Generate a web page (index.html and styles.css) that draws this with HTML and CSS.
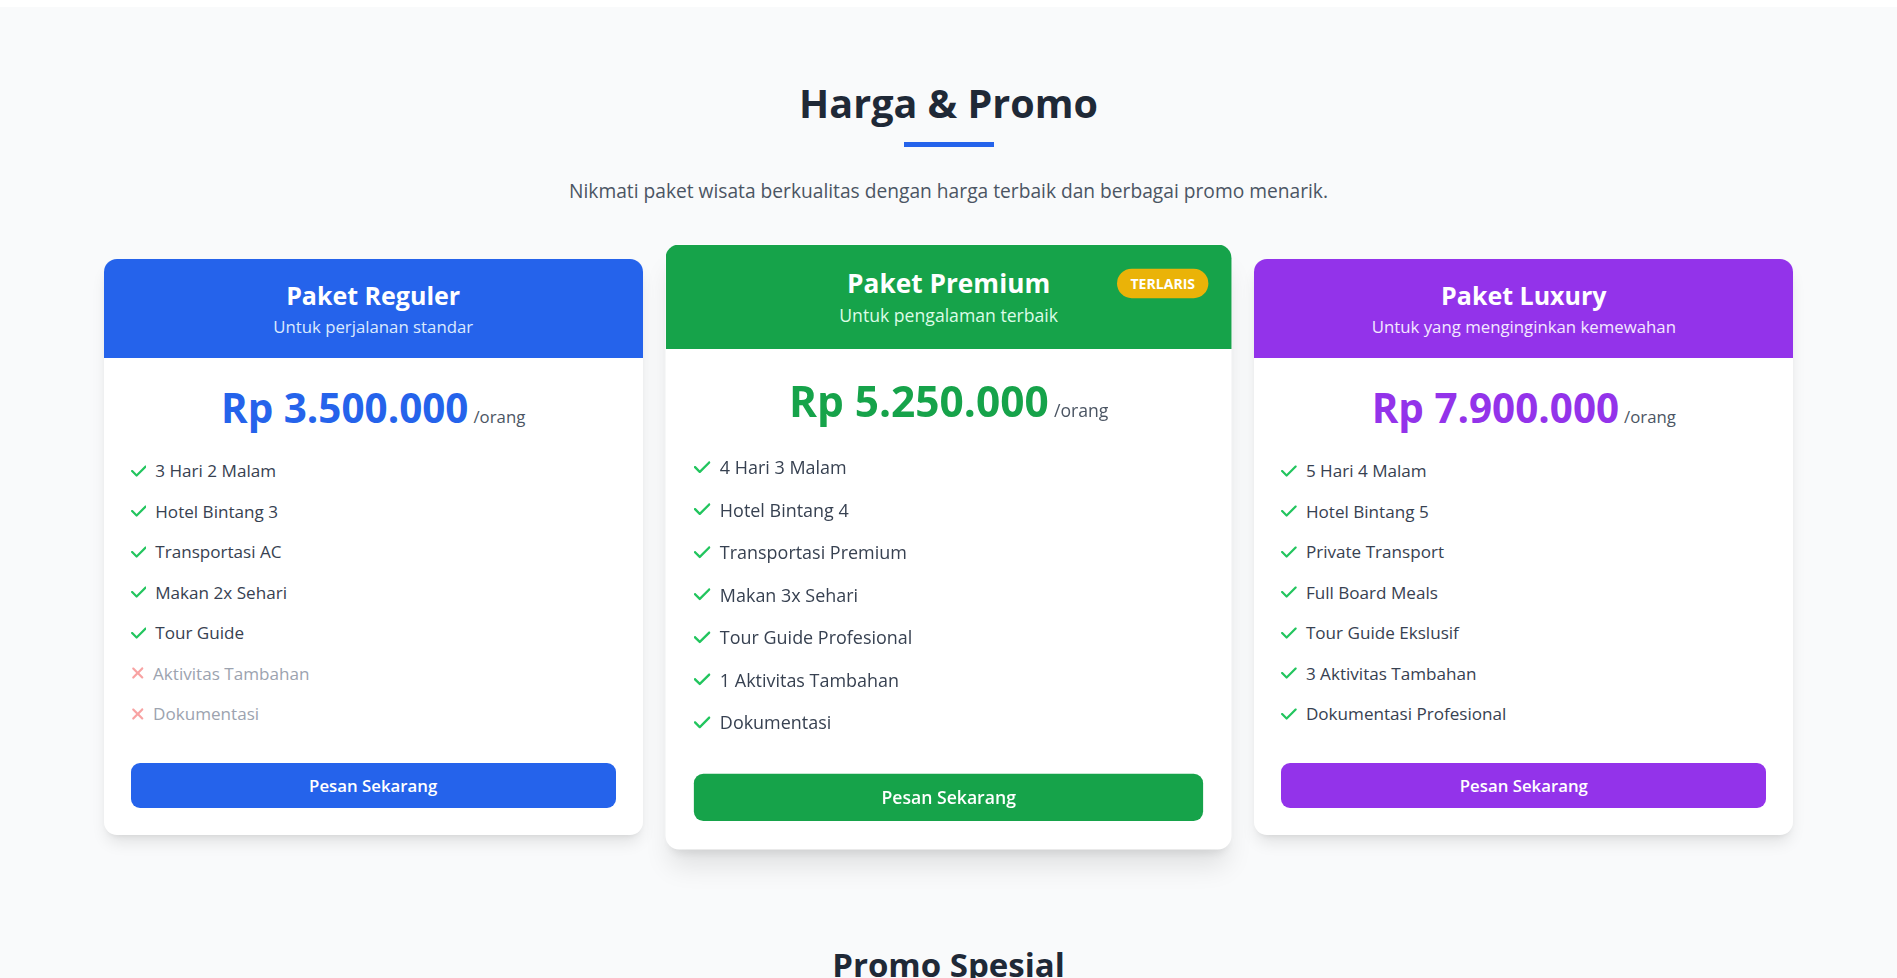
FILE: index.html
```html
<!DOCTYPE html>
<html lang="id">

<head>
    <meta charset="UTF-8">
    <meta name="viewport" content="width=device-width, initial-scale=1.0">
    <title>Harga &amp; Promo</title>
    <link rel="stylesheet" href="styles.css">
</head>

<body>
    <div class="strip"></div>

    <section class="harga">
        <h2 class="judul">Harga &amp; Promo</h2>
        <div class="garis"></div>
        <p class="deskripsi">Nikmati paket wisata berkualitas dengan harga terbaik dan berbagai promo menarik.</p>

        <div class="kartu-grid">
            <!-- paket reguler -->
            <div class="kartu biru">
                <div class="kartu-atas">
                    <h3>Paket Reguler</h3>
                    <p>Untuk perjalanan standar</p>
                </div>
                <div class="kartu-isi">
                    <div class="harga-baris"><span class="nominal">Rp 3.500.000</span><span class="per">/orang</span></div>
                    <ul class="fitur">
                        <li><svg class="cek" viewBox="0 0 448 512"><path d="M438.6 105.4c12.5 12.5 12.5 32.8 0 45.3l-256 256c-12.5 12.5-32.8 12.5-45.3 0l-128-128c-12.5-12.5-12.5-32.8 0-45.3s32.8-12.5 45.3 0L160 338.7 393.4 105.4c12.5-12.5 32.8-12.5 45.3 0z"/></svg>3 Hari 2 Malam</li>
                        <li><svg class="cek" viewBox="0 0 448 512"><path d="M438.6 105.4c12.5 12.5 12.5 32.8 0 45.3l-256 256c-12.5 12.5-32.8 12.5-45.3 0l-128-128c-12.5-12.5-12.5-32.8 0-45.3s32.8-12.5 45.3 0L160 338.7 393.4 105.4c12.5-12.5 32.8-12.5 45.3 0z"/></svg>Hotel Bintang 3</li>
                        <li><svg class="cek" viewBox="0 0 448 512"><path d="M438.6 105.4c12.5 12.5 12.5 32.8 0 45.3l-256 256c-12.5 12.5-32.8 12.5-45.3 0l-128-128c-12.5-12.5-12.5-32.8 0-45.3s32.8-12.5 45.3 0L160 338.7 393.4 105.4c12.5-12.5 32.8-12.5 45.3 0z"/></svg>Transportasi AC</li>
                        <li><svg class="cek" viewBox="0 0 448 512"><path d="M438.6 105.4c12.5 12.5 12.5 32.8 0 45.3l-256 256c-12.5 12.5-32.8 12.5-45.3 0l-128-128c-12.5-12.5-12.5-32.8 0-45.3s32.8-12.5 45.3 0L160 338.7 393.4 105.4c12.5-12.5 32.8-12.5 45.3 0z"/></svg>Makan 2x Sehari</li>
                        <li><svg class="cek" viewBox="0 0 448 512"><path d="M438.6 105.4c12.5 12.5 12.5 32.8 0 45.3l-256 256c-12.5 12.5-32.8 12.5-45.3 0l-128-128c-12.5-12.5-12.5-32.8 0-45.3s32.8-12.5 45.3 0L160 338.7 393.4 105.4c12.5-12.5 32.8-12.5 45.3 0z"/></svg>Tour Guide</li>
                        <li class="tidak"><svg class="silang" viewBox="0 0 384 512"><path d="M342.6 150.6c12.5-12.5 12.5-32.8 0-45.3s-32.8-12.5-45.3 0L192 210.7 86.6 105.4c-12.5-12.5-32.8-12.5-45.3 0s-12.5 32.8 0 45.3L146.7 256 41.4 361.4c-12.5 12.5-12.5 32.8 0 45.3s32.8 12.5 45.3 0L192 301.3 297.4 406.6c12.5 12.5 32.8 12.5 45.3 0s12.5-32.8 0-45.3L237.3 256 342.6 150.6z"/></svg>Aktivitas Tambahan</li>
                        <li class="tidak"><svg class="silang" viewBox="0 0 384 512"><path d="M342.6 150.6c12.5-12.5 12.5-32.8 0-45.3s-32.8-12.5-45.3 0L192 210.7 86.6 105.4c-12.5-12.5-32.8-12.5-45.3 0s-12.5 32.8 0 45.3L146.7 256 41.4 361.4c-12.5 12.5-12.5 32.8 0 45.3s32.8 12.5 45.3 0L192 301.3 297.4 406.6c12.5 12.5 32.8 12.5 45.3 0s12.5-32.8 0-45.3L237.3 256 342.6 150.6z"/></svg>Dokumentasi</li>
                    </ul>
                    <button type="button">Pesan Sekarang</button>
                </div>
            </div>

            <!-- paket premium -->
            <div class="kartu hijau populer">
                <div class="kartu-atas">
                    <span class="lencana">TERLARIS</span>
                    <h3>Paket Premium</h3>
                    <p>Untuk pengalaman terbaik</p>
                </div>
                <div class="kartu-isi">
                    <div class="harga-baris"><span class="nominal">Rp 5.250.000</span><span class="per">/orang</span></div>
                    <ul class="fitur">
                        <li><svg class="cek" viewBox="0 0 448 512"><path d="M438.6 105.4c12.5 12.5 12.5 32.8 0 45.3l-256 256c-12.5 12.5-32.8 12.5-45.3 0l-128-128c-12.5-12.5-12.5-32.8 0-45.3s32.8-12.5 45.3 0L160 338.7 393.4 105.4c12.5-12.5 32.8-12.5 45.3 0z"/></svg>4 Hari 3 Malam</li>
                        <li><svg class="cek" viewBox="0 0 448 512"><path d="M438.6 105.4c12.5 12.5 12.5 32.8 0 45.3l-256 256c-12.5 12.5-32.8 12.5-45.3 0l-128-128c-12.5-12.5-12.5-32.8 0-45.3s32.8-12.5 45.3 0L160 338.7 393.4 105.4c12.5-12.5 32.8-12.5 45.3 0z"/></svg>Hotel Bintang 4</li>
                        <li><svg class="cek" viewBox="0 0 448 512"><path d="M438.6 105.4c12.5 12.5 12.5 32.8 0 45.3l-256 256c-12.5 12.5-32.8 12.5-45.3 0l-128-128c-12.5-12.5-12.5-32.8 0-45.3s32.8-12.5 45.3 0L160 338.7 393.4 105.4c12.5-12.5 32.8-12.5 45.3 0z"/></svg>Transportasi Premium</li>
                        <li><svg class="cek" viewBox="0 0 448 512"><path d="M438.6 105.4c12.5 12.5 12.5 32.8 0 45.3l-256 256c-12.5 12.5-32.8 12.5-45.3 0l-128-128c-12.5-12.5-12.5-32.8 0-45.3s32.8-12.5 45.3 0L160 338.7 393.4 105.4c12.5-12.5 32.8-12.5 45.3 0z"/></svg>Makan 3x Sehari</li>
                        <li><svg class="cek" viewBox="0 0 448 512"><path d="M438.6 105.4c12.5 12.5 12.5 32.8 0 45.3l-256 256c-12.5 12.5-32.8 12.5-45.3 0l-128-128c-12.5-12.5-12.5-32.8 0-45.3s32.8-12.5 45.3 0L160 338.7 393.4 105.4c12.5-12.5 32.8-12.5 45.3 0z"/></svg>Tour Guide Profesional</li>
                        <li><svg class="cek" viewBox="0 0 448 512"><path d="M438.6 105.4c12.5 12.5 12.5 32.8 0 45.3l-256 256c-12.5 12.5-32.8 12.5-45.3 0l-128-128c-12.5-12.5-12.5-32.8 0-45.3s32.8-12.5 45.3 0L160 338.7 393.4 105.4c12.5-12.5 32.8-12.5 45.3 0z"/></svg>1 Aktivitas Tambahan</li>
                        <li><svg class="cek" viewBox="0 0 448 512"><path d="M438.6 105.4c12.5 12.5 12.5 32.8 0 45.3l-256 256c-12.5 12.5-32.8 12.5-45.3 0l-128-128c-12.5-12.5-12.5-32.8 0-45.3s32.8-12.5 45.3 0L160 338.7 393.4 105.4c12.5-12.5 32.8-12.5 45.3 0z"/></svg>Dokumentasi</li>
                    </ul>
                    <button type="button">Pesan Sekarang</button>
                </div>
            </div>

            <!-- paket luxury -->
            <div class="kartu ungu">
                <div class="kartu-atas">
                    <h3>Paket Luxury</h3>
                    <p>Untuk yang menginginkan kemewahan</p>
                </div>
                <div class="kartu-isi">
                    <div class="harga-baris"><span class="nominal">Rp 7.900.000</span><span class="per">/orang</span></div>
                    <ul class="fitur">
                        <li><svg class="cek" viewBox="0 0 448 512"><path d="M438.6 105.4c12.5 12.5 12.5 32.8 0 45.3l-256 256c-12.5 12.5-32.8 12.5-45.3 0l-128-128c-12.5-12.5-12.5-32.8 0-45.3s32.8-12.5 45.3 0L160 338.7 393.4 105.4c12.5-12.5 32.8-12.5 45.3 0z"/></svg>5 Hari 4 Malam</li>
                        <li><svg class="cek" viewBox="0 0 448 512"><path d="M438.6 105.4c12.5 12.5 12.5 32.8 0 45.3l-256 256c-12.5 12.5-32.8 12.5-45.3 0l-128-128c-12.5-12.5-12.5-32.8 0-45.3s32.8-12.5 45.3 0L160 338.7 393.4 105.4c12.5-12.5 32.8-12.5 45.3 0z"/></svg>Hotel Bintang 5</li>
                        <li><svg class="cek" viewBox="0 0 448 512"><path d="M438.6 105.4c12.5 12.5 12.5 32.8 0 45.3l-256 256c-12.5 12.5-32.8 12.5-45.3 0l-128-128c-12.5-12.5-12.5-32.8 0-45.3s32.8-12.5 45.3 0L160 338.7 393.4 105.4c12.5-12.5 32.8-12.5 45.3 0z"/></svg>Private Transport</li>
                        <li><svg class="cek" viewBox="0 0 448 512"><path d="M438.6 105.4c12.5 12.5 12.5 32.8 0 45.3l-256 256c-12.5 12.5-32.8 12.5-45.3 0l-128-128c-12.5-12.5-12.5-32.8 0-45.3s32.8-12.5 45.3 0L160 338.7 393.4 105.4c12.5-12.5 32.8-12.5 45.3 0z"/></svg>Full Board Meals</li>
                        <li><svg class="cek" viewBox="0 0 448 512"><path d="M438.6 105.4c12.5 12.5 12.5 32.8 0 45.3l-256 256c-12.5 12.5-32.8 12.5-45.3 0l-128-128c-12.5-12.5-12.5-32.8 0-45.3s32.8-12.5 45.3 0L160 338.7 393.4 105.4c12.5-12.5 32.8-12.5 45.3 0z"/></svg>Tour Guide Ekslusif</li>
                        <li><svg class="cek" viewBox="0 0 448 512"><path d="M438.6 105.4c12.5 12.5 12.5 32.8 0 45.3l-256 256c-12.5 12.5-32.8 12.5-45.3 0l-128-128c-12.5-12.5-12.5-32.8 0-45.3s32.8-12.5 45.3 0L160 338.7 393.4 105.4c12.5-12.5 32.8-12.5 45.3 0z"/></svg>3 Aktivitas Tambahan</li>
                        <li><svg class="cek" viewBox="0 0 448 512"><path d="M438.6 105.4c12.5 12.5 12.5 32.8 0 45.3l-256 256c-12.5 12.5-32.8 12.5-45.3 0l-128-128c-12.5-12.5-12.5-32.8 0-45.3s32.8-12.5 45.3 0L160 338.7 393.4 105.4c12.5-12.5 32.8-12.5 45.3 0z"/></svg>Dokumentasi Profesional</li>
                    </ul>
                    <button type="button">Pesan Sekarang</button>
                </div>
            </div>
        </div>
    </section>

    <section class="promo">
        <h2 class="judul kecil">Promo Spesial</h2>
    </section>
</body>

</html>
```

FILE: styles.css
```css
* {
    box-sizing: border-box;
}

html {
    overflow: hidden;
}

body {
    margin: 0;
    background-color: #f9fafb;
    font-family: "Open Sans", "Noto Sans", sans-serif;
    color: #374151;
}

.strip {
    height: 7px;
    background-color: #ffffff;
}

.harga {
    padding-top: 74px;
    text-align: center;
}

.judul {
    margin: 0;
    font-size: 39.5px;
    line-height: 45px;
    font-weight: 700;
    color: #1f2937;
}

.judul.kecil {
    font-size: 33px;
}

.garis {
    width: 90px;
    height: 5px;
    margin: 16px auto 0;
    background-color: #2563eb;
}

.deskripsi {
    margin: 28px 0 53px;
    font-size: 19.2px;
    line-height: 31px;
    color: #4b5563;
}

.kartu-grid {
    width: 1690px;
    margin: 0 auto;
    display: grid;
    grid-template-columns: repeat(3, 1fr);
    gap: 36px;
    align-items: center;
}

.kartu {
    background-color: #ffffff;
    border-radius: 13px;
    overflow: hidden;
    box-shadow: 0 10px 16px -3px rgba(0, 0, 0, 0.1), 0 4px 6px -4px rgba(0, 0, 0, 0.1);
}

.kartu.populer {
    transform: scale(1.05);
    box-shadow: 0 20px 25px -5px rgba(0, 0, 0, 0.1), 0 8px 10px -6px rgba(0, 0, 0, 0.1);
}

.kartu-atas {
    position: relative;
    padding: 18px;
    color: #ffffff;
}

.kartu-atas h3 {
    margin: 0;
    font-size: 25px;
    line-height: 36px;
    font-weight: 700;
}

.kartu-atas p {
    margin: 0;
    font-size: 16.8px;
    line-height: 27px;
}

.lencana {
    position: absolute;
    top: 23px;
    right: 22px;
    padding: 5px 13px;
    border-radius: 999px;
    background-color: #eab308;
    color: #ffffff;
    font-size: 13.4px;
    line-height: 18px;
    font-weight: 700;
}

.kartu-isi {
    padding: 27px;
}

.harga-baris {
    display: flex;
    justify-content: center;
    align-items: baseline;
    gap: 5px;
    height: 45px;
    margin-bottom: 27px;
}

.nominal {
    font-size: 40.4px;
    line-height: 45px;
    font-weight: 700;
}

.per {
    font-size: 16.8px;
    line-height: 1;
    color: #4b5563;
}

.fitur {
    list-style: none;
    margin: 0 0 36px;
    padding: 0;
    text-align: left;
    display: flex;
    flex-direction: column;
    gap: 13.5px;
}

.fitur li {
    display: flex;
    align-items: center;
    font-size: 17.1px;
    line-height: 27px;
    color: #374151;
}

.fitur svg {
    height: 18px;
    margin-right: 9px;
    flex-shrink: 0;
}

.cek {
    width: 15.75px;
    fill: #22c55e;
}

.silang {
    width: 13.5px;
    fill: #f8a3a3;
}

.fitur li.tidak {
    color: #9ca3af;
}

.kartu-isi button {
    width: 100%;
    height: 45px;
    border: none;
    border-radius: 9px;
    color: #ffffff;
    font-family: "Open Sans", "Noto Sans", sans-serif;
    font-size: 16.8px;
    font-weight: 600;
}

.biru .kartu-atas {
    background-color: #2563eb;
}

.biru .kartu-atas p {
    color: #dbeafe;
}

.biru .nominal {
    color: #2563eb;
}

.biru button {
    background-color: #2563eb;
}

.hijau .kartu-atas {
    background-color: #16a34a;
}

.hijau .kartu-atas p {
    color: #dcfce7;
}

.hijau .nominal {
    color: #16a34a;
}

.hijau button {
    background-color: #16a34a;
}

.ungu .kartu-atas {
    background-color: #9333ea;
}

.ungu .kartu-atas p {
    color: #f3e8ff;
}

.ungu .nominal {
    color: #9333ea;
}

.ungu button {
    background-color: #9333ea;
}

.promo {
    padding-top: 107px;
    text-align: center;
}
```
